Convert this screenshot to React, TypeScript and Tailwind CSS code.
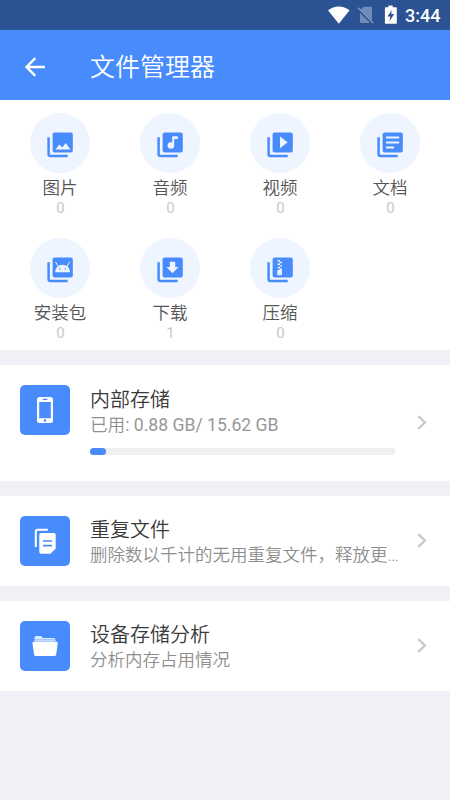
import type { ReactNode } from "react";

const photo = <path d="M25.4 36.6l4.1-5.1 2.7 3.1 3.6-4.5 4.6 6.5z" fill="#eff5ff" />;

const music = (
  <g fill="#eff5ff">
    <circle cx="30.9" cy="32.5" r="3.3" />
    <path d="M32.2 23.2h5.6v2.7h-3.6v6.6h-2z" />
  </g>
);

const play = <path d="M30 23.4l7.6 5.9-7.6 5.9z" fill="#eff5ff" />;

const lines = (
  <path d="M26 24.5h13.2M26 29.5h13.2M26 34.4h8" stroke="#eff5ff" strokeWidth="2" />
);

const android = (
  <g>
    <path d="M25.2 34.2c0-4.5 3.2-7.5 7.4-7.5s7.4 3 7.4 7.5z" fill="#eff5ff" />
    <path d="M28.3 28.6l-2.8-4.8M36.9 28.6l2.8-4.8" stroke="#eff5ff" strokeWidth="1" />
    <circle cx="29.8" cy="31" r=".8" fill="#488bfc" />
    <circle cx="35.3" cy="31" r=".8" fill="#488bfc" />
  </g>
);

const down = <path d="M29.8 23.8h5.4v5.1h3.4l-6.1 6.3-6.1-6.3h3.4z" fill="#eff5ff" />;

const zip = (
  <g>
    <path
      d="M27.5 22.8h2.4M29.5 24.5h2.4M27.5 26.2h2.4M29.5 27.9h2.4M27.5 29.6h2.4M29.5 31.2h2.4"
      stroke="#eff5ff"
      strokeWidth="1.4"
    />
    <rect x="27.3" y="32" width="4.6" height="5.3" rx=".7" fill="#eff5ff" />
    <path d="M28.5 35.6h2.2" stroke="#a9c9fc" strokeWidth=".7" />
  </g>
);

const categories: { label: string; count: number; glyph: ReactNode }[] = [
  { label: "图片", count: 0, glyph: photo },
  { label: "音频", count: 0, glyph: music },
  { label: "视频", count: 0, glyph: play },
  { label: "文档", count: 0, glyph: lines },
  { label: "安装包", count: 0, glyph: android },
  { label: "下载", count: 1, glyph: down },
  { label: "压缩", count: 0, glyph: zip },
];

function Category({ label, count, glyph }: { label: string; count: number; glyph: ReactNode }) {
  return (
    <div className="flex h-[125px] flex-col items-center">
      <div className="size-[60px] rounded-full bg-[#eff5ff]">
        <svg viewBox="0 0 60 60" className="size-[60px]" fill="none">
          <path d="M18.6 24.3v16.9q0 1.8 1.8 1.8h17.3" stroke="#488bfc" strokeWidth="2.5" />
          <rect x="22.6" y="19.4" width="20.2" height="20" rx="2" fill="#488bfc" />
          {glyph}
        </svg>
      </div>
      <div className="mt-[3px] text-[17.5px] leading-6 font-[350] text-[#555]">{label}</div>
      <div className="pl-px text-[15px] leading-[17px] text-[#c8c8c8]">{count}</div>
    </div>
  );
}

function StatusBar() {
  return (
    <div className="flex h-[30px] items-center bg-[#2b5394] pl-[327px] text-white">
      <svg viewBox="0 0 24 20" className="h-5 w-6 shrink-0" fill="currentColor">
        <path d="M1 5.2C7.5.1 16.1.1 22.6 5.2L11.8 18.8z" />
      </svg>
      <svg viewBox="0 0 18 20" className="ml-[6px] h-5 w-[18px] shrink-0">
        <path d="M6.8 1.8H14q1 0 1 1V18H4q-1 0-1-1V5.6z" fill="#718cb8" />
        <path d="M.8 3.7L16 18.6" stroke="#2b5394" strokeWidth="3" />
        <path d="M1.2 2.7L16.2 18.1" stroke="#8098bf" strokeWidth="1.5" />
      </svg>
      <svg viewBox="0 0 14 20" className="ml-[9px] h-5 w-[14px] shrink-0">
        <path d="M4.4.6h4.3v1.7h3.2q.9 0 .9.9v14.7q0 .9-.9.9H1.8q-.9 0-.9-.9V3.2q0-.9.9-.9h2.6z" fill="currentColor" />
        <path d="M7.8 5L3.5 11.5h2.7l-.7 4.8L10.2 9H7.2z" fill="#2b5394" />
      </svg>
      <span className="ml-[7px] pt-[2px] text-[18px] leading-[22px] font-medium">3:44</span>
    </div>
  );
}

function Badge({ children }: { children: ReactNode }) {
  return (
    <div className="size-[50px] shrink-0 rounded-[5px] bg-[#488bfc]">
      <svg viewBox="0 0 50 50" className="size-[50px]" fill="none">
        {children}
      </svg>
    </div>
  );
}

function Chevron() {
  return (
    <svg viewBox="0 0 12 18" className="mr-[22px] h-[18px] w-3 shrink-0" fill="none">
      <path d="M2.3 2.1L8.9 8.5l-6.6 6.4" stroke="#c8c8c8" strokeWidth="2.3" />
    </svg>
  );
}

function Row({ title, detail, icon }: { title: string; detail: string; icon: ReactNode }) {
  return (
    <div className="mt-[15px] flex h-[90px] items-center bg-white pl-5">
      <Badge>{icon}</Badge>
      <div className="ml-5 pt-[3px]">
        <div className="text-[20px] leading-[27px] font-[350] text-[#3a3a3a]">{title}</div>
        <div className="-mt-px text-[17.5px] leading-6 font-[350] whitespace-nowrap text-[#8e8e8e]">{detail}</div>
      </div>
      <div className="ml-auto flex">
        <Chevron />
      </div>
    </div>
  );
}

export default function App() {
  return (
    <div
      className="h-[800px] w-[450px] overflow-hidden bg-[#eff1f6] font-[Roboto,'Noto_Sans_CJK_SC',sans-serif]"
      lang="zh-CN"
    >
      <StatusBar />
      <header className="flex h-[70px] items-center bg-[#488bfc] text-white">
        <svg viewBox="0 0 24 24" className="mt-[3px] ml-[23px] size-6" fill="none" stroke="currentColor" strokeWidth="2.4">
          <path d="M22 12H4M12.3 3.2L3.5 12l8.8 8.8" />
        </svg>
        <h1 className="ml-[43px] pt-[5px] text-[25px] leading-9 font-[350]">文件管理器</h1>
      </header>

      <section className="grid h-[250px] grid-cols-4 content-start bg-white px-[5px] pt-[13px]">
        {categories.map((c) => (
          <Category key={c.label} {...c} />
        ))}
      </section>

      <section className="mt-[15px] flex h-[115.5px] bg-white pt-5 pl-5">
        <Badge>
          <path
            fillRule="evenodd"
            fill="#fff"
            d="M19.5 12h11q2.5 0 2.5 2.5v21q0 2.5-2.5 2.5h-11q-2.5 0-2.5-2.5v-21q0-2.5 2.5-2.5zm-.3 5v16.2h11.6V17zM22.7 13.8v1.1h4.6v-1.1zM25 34.2a1.3 1.3 0 100 2.6 1.3 1.3 0 000-2.6z"
          />
        </Badge>
        <div className="ml-5 w-[305px]">
          <div className="pt-[2px] text-[20px] leading-[27px] font-[350] text-[#3a3a3a]">内部存储</div>
          <div className="-mt-px text-[17.6px] leading-6 text-[#989898]">
            <span className="font-[350] text-[#8e8e8e]">已用</span>: 0.88 GB/ 15.62 GB
          </div>
          <div className="mt-[11px] h-[6.5px] rounded-full bg-[#efefef]">
            <div className="h-full w-4 rounded-full bg-[#488bfc]" />
          </div>
        </div>
        <div className="mt-[29px] ml-auto">
          <Chevron />
        </div>
      </section>

      <Row
        title="重复文件"
        detail="删除数以千计的无用重复文件，释放更…"
        icon={
          <>
            <path d="M15.8 31V15.5q0-1.7 1.7-1.7h10.3" stroke="#fff" strokeWidth="2" />
            <path d="M21 17h13q1.7 0 1.7 1.7v13.8l-5.2 5.2H21q-1.7 0-1.7-1.7V18.7q0-1.7 1.7-1.7z" fill="#fff" />
            <path d="M23 25h9M23 29.6h9" stroke="#488bfc" strokeWidth="1.6" />
          </>
        }
      />
      <Row
        title="设备存储分析"
        detail="分析内存占用情况"
        icon={
          <>
            <path d="M14.5 20.5v-4q0-1.5 1.5-1.5h5.2l1.6 2H34q1.4 0 1.8 3.5z" fill="#dce9ff" />
            <path d="M14.5 18.8h21" stroke="#91b9fe" strokeWidth="1" />
            <path d="M13.6 20.8h23q1.3 0 1.1 1.4l-1.5 11.3q-.2 1.6-1.8 1.6H15.8q-1.6 0-1.8-1.6l-1.5-11.3q-.2-1.4 1.1-1.4z" fill="#fff" />
          </>
        }
      />
    </div>
  );
}
